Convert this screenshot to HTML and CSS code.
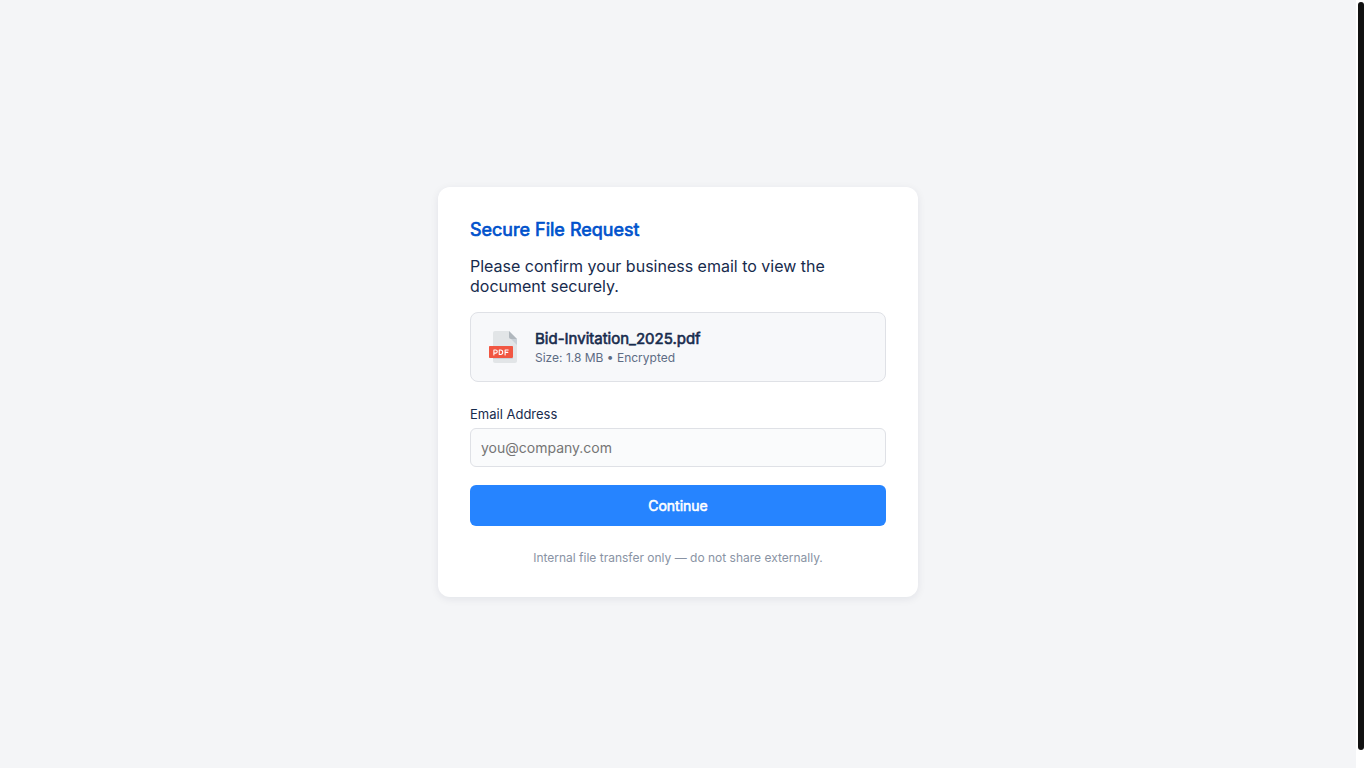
FILE: index.html
```html
<!DOCTYPE html>
<html lang="en">
<head>
<meta charset="utf-8">
<meta name="viewport" content="width=device-width, initial-scale=1">
<title>Secure File Request</title>
<link rel="stylesheet" href="styles.css">
</head>
<body>
<main class="page">
  <div class="card">
    <h1 class="title">Secure File Request</h1>
    <p class="intro">Please confirm your business email to view the document securely.</p>
    <section class="file">
      <svg class="file-icon" viewBox="0 0 512 512" aria-hidden="true">
        <path fill="#e2e5e7" d="M128 0c-17.600 0-32 14.400-32 32v448c0 17.600 14.400 32 32 32h320c17.600 0 32-14.400 32-32V128L352 0H128z"/>
        <path fill="#b0b7bd" d="M384 128h96L352 0v96c0 17.600 14.400 32 32 32z"/>
        <path fill="#cad1d8" d="M480 224l-96-96h96z"/>
        <path fill="#f15642" d="M416 416c0 8.800-7.200 16-16 16H48c-8.800 0-16-7.200-16-16V256c0-8.800 7.200-16 16-16h352c8.800 0 16 7.200 16 16v160z"/>
        <g fill="none" stroke="#fff" stroke-width="17" stroke-linecap="round" stroke-linejoin="round">
          <path d="M110 384v-80h29c34 0 34 50 0 50h-29"/>
          <path d="M196 304v72h21c46 0 46-72 0-72z"/>
          <path d="M290 384v-80h49M290 342h43"/>
        </g>
        <path fill="#cad1d8" d="M400 432H96v16h304c8.800 0 16-7.200 16-16v-16c0 8.800-7.200 16-16 16z"/>
      </svg>
      <div class="file-info">
        <div class="file-name">Bid-Invitation_2025.pdf</div>
        <div class="file-meta">Size: 1.8 MB • Encrypted</div>
      </div>
    </section>
    <form class="form">
      <label class="label" for="email">Email Address</label>
      <input class="input" type="email" id="email" placeholder="you@company.com">
      <button class="button" type="submit">Continue</button>
    </form>
    <p class="note">Internal file transfer only — do not share externally.</p>
  </div>
</main>
<div class="scrollbar" aria-hidden="true"><div class="scrollbar-thumb"></div></div>
</body>
</html>
```
FILE: styles.css
```css
* {
  box-sizing: border-box;
}

body {
  height: 100vh;
  margin: 0;
  display: flex;
  background: #f4f5f7;
  color: #172b4d;
  font-family: Inter, "Liberation Sans", sans-serif;
  font-optical-sizing: none;
}

.page {
  flex: 1;
  min-width: 0;
  padding-top: 16px;
  display: flex;
  align-items: center;
  justify-content: center;
}

.scrollbar {
  flex: none;
  width: 10px;
  padding: 2px 2px 18px;
  background: #fff;
}

.scrollbar-thumb {
  height: 100%;
  background: #111;
  border-radius: 3px;
}

.card {
  width: 100%;
  max-width: 480px;
  padding: 32px;
  background: #fff;
  border-radius: 12px;
  box-shadow: 0 2px 8px rgba(9, 30, 66, 0.08);
}

.title {
  margin: 0 0 16px;
  color: #0052cc;
  font-size: 18px;
  line-height: 21px;
}

.title,
.file-name,
.button {
  font-weight: 400;
  -webkit-text-stroke: 0.04em currentColor;
}

.intro {
  margin: 0 0 16px;
  font-size: 16px;
  line-height: 20px;
}

.file {
  display: flex;
  align-items: center;
  gap: 16px;
  padding: 16px;
  margin-bottom: 24px;
  background: #f7f8fa;
  border: 1px solid #dfe1e6;
  border-radius: 8px;
}

.file-icon {
  width: 32px;
  height: 32px;
}

.file-name {
  font-size: 15px;
  line-height: 20px;
}

.file-meta {
  margin-top: 1px;
  color: #5e6c84;
  font-size: 12px;
  line-height: 15px;
}

.form {
  display: flex;
  flex-direction: column;
}

.label {
  margin-bottom: 6px;
  font-size: 13px;
  line-height: 16px;
}

.input {
  width: 100%;
  padding: 10px;
  margin: 0 0 18px;
  background: #fafbfc;
  border: 1px solid #dfe1e6;
  border-radius: 6px;
  color: #172b4d;
  font-family: inherit;
  font-size: 14px;
}

.button {
  padding: 12px;
  background: #2684ff;
  border: 0;
  border-radius: 6px;
  color: #fff;
  font-family: inherit;
  font-size: 14px;
  cursor: pointer;
}

.note {
  margin: 24px 0 0;
  color: #8993a4;
  font-size: 12px;
  line-height: 15px;
  text-align: center;
}
```
